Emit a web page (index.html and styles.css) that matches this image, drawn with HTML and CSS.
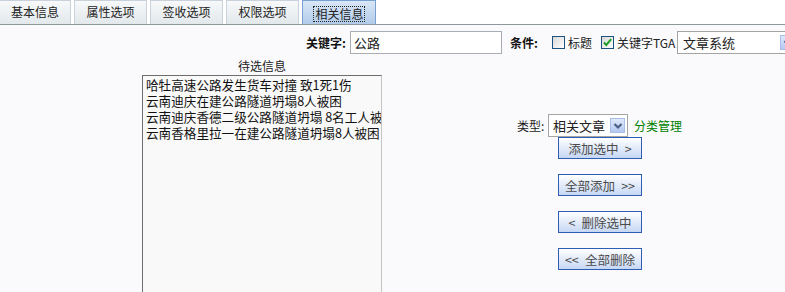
FILE: index.html
```html
<!DOCTYPE html>
<html lang="zh">
<head>
    <meta charset="UTF-8">
    <meta name="viewport" content="width=device-width, initial-scale=1.0">
    <title>相关信息</title>
    <link rel="stylesheet" href="styles.css">
</head>
<body>
    <div class="tabs">
        <div class="tab first">基本信息</div>
        <div class="tab">属性选项</div>
        <div class="tab">签收选项</div>
        <div class="tab">权限选项</div>
        <div class="tab active"><span class="focus">相关信息</span></div>
    </div>

    <div class="panel">
        <div class="search-row">
            <label class="lbl kw-lbl">关键字:</label>
            <input class="kw" type="text" value="公路">
            <span class="lbl cond-lbl">条件:</span>
            <span class="chk"></span><span class="chk-text">标题</span>
            <span class="chk on">
                <svg width="11" height="11" viewBox="0 0 11 11"><path d="M2 5.5 L4.3 8 L9.2 2.2" fill="none" stroke="#1f9e24" stroke-width="2"/></svg>
            </span><span class="chk-text wide">关键字TGA</span>
            <div class="sel sel-sys">
                <span>文章系统</span>
                <span class="arrow"><svg width="10" height="8" viewBox="0 0 10 8"><path d="M1.5 2 L5 5.5 L8.5 2" fill="none" stroke="#4b5f86" stroke-width="2.2"/></svg></span>
            </div>
        </div>

        <div class="pick">
            <div class="list-col">
                <div class="list-title">待选信息</div>
                <div class="listbox">
                    <div>哈牡高速公路发生货车对撞 致1死1伤</div>
                    <div>云南迪庆在建公路隧道坍塌8人被困</div>
                    <div>云南迪庆香德二级公路隧道坍塌 8名工人被困</div>
                    <div>云南香格里拉一在建公路隧道坍塌8人被困</div>
                </div>
            </div>

            <div class="ops">
                <div class="type-row">
                    <span class="type-lbl">类型:</span>
                    <div class="sel sel-type">
                        <span>相关文章</span>
                        <span class="arrow"><svg width="10" height="8" viewBox="0 0 10 8"><path d="M1.5 2 L5 5.5 L8.5 2" fill="none" stroke="#4b5f86" stroke-width="2.2"/></svg></span>
                    </div>
                    <a class="manage" href="#">分类管理</a>
                </div>
                <div class="btns">
                    <button class="btn">添加选中&ensp;&gt;</button>
                    <button class="btn">全部添加&ensp;&gt;&gt;</button>
                    <button class="btn">&lt;&ensp;删除选中</button>
                    <button class="btn">&lt;&lt;&ensp;全部删除</button>
                </div>
            </div>
        </div>
    </div>
</body>
</html>
```

FILE: styles.css
```css
html, body {
    margin: 0;
    overflow: hidden;
}
body {
    font-family: "Noto Sans CJK SC", "Liberation Sans", sans-serif;
    font-size: 12px;
    color: #222;
    background-color: #fafafd;
    height: 292px;
}
.tabs {
    display: flex;
    gap: 3px;
    height: 24px;
    background-color: #fff;
    border-bottom: 1px solid #8e989b;
}
.tab {
    width: 73px;
    height: 24px;
    box-sizing: border-box;
    border: 1px solid #c9d2da;
    border-bottom: none;
    background: linear-gradient(#f7f9fa, #e2e8eb);
    line-height: 22px;
    text-align: center;
    color: #222;
}
.tab.first {
    width: 71px;
    border-left: none;
}
.tab.active {
    width: 74px;
    border-color: #78a0d0;
    background: linear-gradient(#d9e7f6, #b2cbea);
}
.focus {
    display: inline-block;
    line-height: 14px;
    border: 1px dotted #222;
    padding: 0 0 0 1px;
    vertical-align: middle;
}
.search-row {
    display: flex;
    align-items: center;
    height: 23px;
    margin-top: 6px;
    white-space: nowrap;
}
.search-row > * {
    flex-shrink: 0;
}
.lbl {
    font-weight: bold;
    color: #111;
}
.kw-lbl {
    width: 46px;
    margin-left: 300px;
    text-align: right;
}
.kw {
    width: 152px;
    height: 23px;
    box-sizing: border-box;
    margin: 0 0 0 4px;
    border: 1px solid #a7adb3;
    padding: 0 3px;
    font: 13px "Noto Sans CJK SC", sans-serif;
    color: #222;
    background: #fff;
}
.cond-lbl {
    width: 36px;
    margin-left: 8px;
}
.chk {
    width: 13px;
    height: 13px;
    box-sizing: border-box;
    margin-left: 6px;
    border: 1px solid #1c5180;
    background: linear-gradient(135deg, #d8d8d8, #ffffff);
    display: flex;
    align-items: center;
    justify-content: center;
}
.chk.on {
    margin-left: 9px;
}
.chk-text {
    margin-left: 3px;
    width: 24px;
}
.chk-text.wide {
    width: 56px;
}
.sel {
    position: relative;
    height: 23px;
    box-sizing: border-box;
    border: 1px solid #a5a5a5;
    background: #fff;
    display: flex;
    align-items: center;
    padding-left: 5px;
    flex-shrink: 0;
    white-space: nowrap;
}
.arrow {
    position: absolute;
    right: 2px;
    top: 3px;
    width: 15px;
    height: 15px;
    box-sizing: border-box;
    border: 1px solid #a9bde9;
    background: linear-gradient(#dfe8fb, #b5c8f0);
    display: flex;
    align-items: center;
    justify-content: center;
}
.sel-sys {
    width: 121px;
    margin-left: 4px;
    font-size: 13px;
}
.pick {
    display: flex;
    margin-top: 5px;
}
.list-col {
    margin-left: 142px;
    width: 240px;
    flex-shrink: 0;
}
.list-title {
    text-align: center;
    line-height: 14px;
    height: 14px;
}
.listbox {
    margin-top: 2px;
    height: 240px;
    box-sizing: border-box;
    border: 1px solid;
    border-color: #6d6d6d #c4c4c4 #c4c4c4 #6d6d6d;
    background-color: #f9f9f9;
    padding: 1px 0 0 3px;
    font-size: 12.6px;
    line-height: 16px;
    white-space: nowrap;
    overflow: hidden;
    color: #111;
}
.ops {
    margin-left: 135px;
    padding-top: 55px;
}
.type-row {
    display: flex;
    align-items: center;
    height: 23px;
}
.type-lbl {
    width: 30px;
}
.sel-type {
    width: 80px;
    margin-left: 1px;
    padding-left: 4px;
    font-size: 13px;
}
.manage {
    margin-left: 6px;
    color: #008000;
    text-decoration: none;
}
.btns {
    display: flex;
    flex-direction: column;
    gap: 15px;
    margin-left: 41px;
}
.btn {
    width: 84px;
    height: 22px;
    border: 1px solid #2f5db4;
    background: linear-gradient(#ffffff, #c6d7f4);
    color: #4a4a4a;
    font: 12.5px "Noto Sans CJK SC", sans-serif;
    padding: 0;
    cursor: pointer;
}
```
